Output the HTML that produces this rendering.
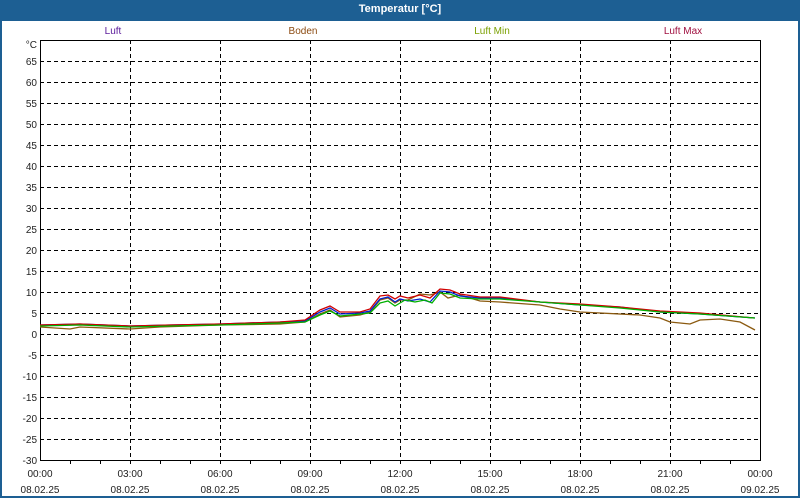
<!DOCTYPE html>
<html><head><meta charset="utf-8"><style>
body{margin:0;width:800px;height:500px;overflow:hidden;background:#fff;font-family:"Liberation Sans",sans-serif}
.frame{position:absolute;left:0;top:0;width:796px;height:496px;border:2px solid #1d5f93;border-top:none}
.title{position:absolute;left:0;top:0;width:800px;height:21px;background:#1d5f93;color:#fff;font-weight:bold;font-size:11px;text-align:center;line-height:18px}
svg{position:absolute;left:0;top:0}
text{font-family:"Liberation Sans",sans-serif;font-size:10px}
</style></head><body>
<div class="frame"></div>
<div class="title">Temperatur [°C]</div>
<svg width="800" height="500">
<g stroke="#000" stroke-dasharray="4,3" stroke-width="1">
<line x1="40" x2="760" y1="61.5" y2="61.5"/><line x1="40" x2="760" y1="82.5" y2="82.5"/><line x1="40" x2="760" y1="103.5" y2="103.5"/><line x1="40" x2="760" y1="124.5" y2="124.5"/><line x1="40" x2="760" y1="145.5" y2="145.5"/><line x1="40" x2="760" y1="166.5" y2="166.5"/><line x1="40" x2="760" y1="187.5" y2="187.5"/><line x1="40" x2="760" y1="208.5" y2="208.5"/><line x1="40" x2="760" y1="229.5" y2="229.5"/><line x1="40" x2="760" y1="250.5" y2="250.5"/><line x1="40" x2="760" y1="271.5" y2="271.5"/><line x1="40" x2="760" y1="292.5" y2="292.5"/><line x1="40" x2="760" y1="313.5" y2="313.5"/><line x1="40" x2="760" y1="334.5" y2="334.5"/><line x1="40" x2="760" y1="355.5" y2="355.5"/><line x1="40" x2="760" y1="376.5" y2="376.5"/><line x1="40" x2="760" y1="397.5" y2="397.5"/><line x1="40" x2="760" y1="418.5" y2="418.5"/><line x1="40" x2="760" y1="439.5" y2="439.5"/>
<line y1="40" y2="460" x1="130.5" x2="130.5"/><line y1="40" y2="460" x1="220.5" x2="220.5"/><line y1="40" y2="460" x1="310.5" x2="310.5"/><line y1="40" y2="460" x1="400.5" x2="400.5"/><line y1="40" y2="460" x1="490.5" x2="490.5"/><line y1="40" y2="460" x1="580.5" x2="580.5"/><line y1="40" y2="460" x1="670.5" x2="670.5"/>
</g>
<rect x="40.5" y="40.5" width="720" height="420" fill="none" stroke="#000"/>
<g stroke="#000"><line x1="70.5" x2="70.5" y1="460" y2="464"/><line x1="100.5" x2="100.5" y1="460" y2="464"/><line x1="130.5" x2="130.5" y1="460" y2="464"/><line x1="160.5" x2="160.5" y1="460" y2="464"/><line x1="190.5" x2="190.5" y1="460" y2="464"/><line x1="220.5" x2="220.5" y1="460" y2="464"/><line x1="250.5" x2="250.5" y1="460" y2="464"/><line x1="280.5" x2="280.5" y1="460" y2="464"/><line x1="310.5" x2="310.5" y1="460" y2="464"/><line x1="340.5" x2="340.5" y1="460" y2="464"/><line x1="370.5" x2="370.5" y1="460" y2="464"/><line x1="400.5" x2="400.5" y1="460" y2="464"/><line x1="430.5" x2="430.5" y1="460" y2="464"/><line x1="460.5" x2="460.5" y1="460" y2="464"/><line x1="490.5" x2="490.5" y1="460" y2="464"/><line x1="520.5" x2="520.5" y1="460" y2="464"/><line x1="550.5" x2="550.5" y1="460" y2="464"/><line x1="580.5" x2="580.5" y1="460" y2="464"/><line x1="610.5" x2="610.5" y1="460" y2="464"/><line x1="640.5" x2="640.5" y1="460" y2="464"/><line x1="670.5" x2="670.5" y1="460" y2="464"/><line x1="700.5" x2="700.5" y1="460" y2="464"/><line x1="730.5" x2="730.5" y1="460" y2="464"/></g>
<g fill="#222" text-anchor="end">
<text x="37" y="48">°C</text><text x="37" y="65">65</text><text x="37" y="86">60</text><text x="37" y="107">55</text><text x="37" y="128">50</text><text x="37" y="149">45</text><text x="37" y="170">40</text><text x="37" y="191">35</text><text x="37" y="212">30</text><text x="37" y="233">25</text><text x="37" y="254">20</text><text x="37" y="275">15</text><text x="37" y="296">10</text><text x="37" y="317">5</text><text x="37" y="338">0</text><text x="37" y="359">-5</text><text x="37" y="380">-10</text><text x="37" y="401">-15</text><text x="37" y="422">-20</text><text x="37" y="443">-25</text><text x="37" y="464">-30</text>
</g>
<g fill="#222" text-anchor="middle">
<text x="40" y="477">00:00</text><text x="130" y="477">03:00</text><text x="220" y="477">06:00</text><text x="310" y="477">09:00</text><text x="400" y="477">12:00</text><text x="490" y="477">15:00</text><text x="580" y="477">18:00</text><text x="670" y="477">21:00</text><text x="760" y="477">00:00</text>
<text x="40" y="493">08.02.25</text><text x="130" y="493">08.02.25</text><text x="220" y="493">08.02.25</text><text x="310" y="493">08.02.25</text><text x="400" y="493">08.02.25</text><text x="490" y="493">08.02.25</text><text x="580" y="493">08.02.25</text><text x="670" y="493">08.02.25</text><text x="760" y="493">09.02.25</text>
<text x="113" y="34" fill="#5a1a9a">Luft</text><text x="303" y="34" fill="#8b4a10">Boden</text><text x="492" y="34" fill="#7aa000">Luft Min</text><text x="683" y="34" fill="#a01040">Luft Max</text>
</g>
<g fill="none" stroke-width="1.3">
<path stroke="#8b5a10" d="M40 327L70 329L80 327L130 329L160 327L220 325L280 324L305 322L320 314L330 310L340 317L360 315L370 312L380 300L388 298L395 303L400 300L408 300L420 294L430 295L440 292L448 298L460 295L480 301L500 302L540 305L560 309L580 312L640 315L660 318L670 322L690 324L700 320L720 319L740 322L755 330"/>
<path stroke="#0020d0" d="M40 325L80 324L130 326L170 325L220 324L280 322L305 321L320 312L330 308L340 314L360 313L370 311L380 299L388 297L395 302L400 299L408 301L420 299L430 302L440 291L450 292L460 296L480 298L500 298L540 302L580 305L620 307L660 312L700 314L755 318"/>
<path stroke="#d00000" d="M40 325L80 324L130 326L170 325L220 324L280 322L305 320L320 310L330 306L340 312L360 312L370 309L380 296L388 295L395 299L400 296L408 298L420 295L430 298L440 289L450 290L460 294L480 297L500 297L540 302L580 304L620 307L660 311L700 313L754 318"/>
<path stroke="#00b000" d="M40 326L80 325L130 327L170 326L220 325L280 323L305 322L320 315L330 311L340 316L360 314L370 313L380 303L388 301L395 306L405 300L415 302L425 300L432 303L440 293L450 294L460 298L480 299L500 299L540 302L580 305L620 308L660 312L700 314L755 318"/>
</g>
</svg>
</body></html>
